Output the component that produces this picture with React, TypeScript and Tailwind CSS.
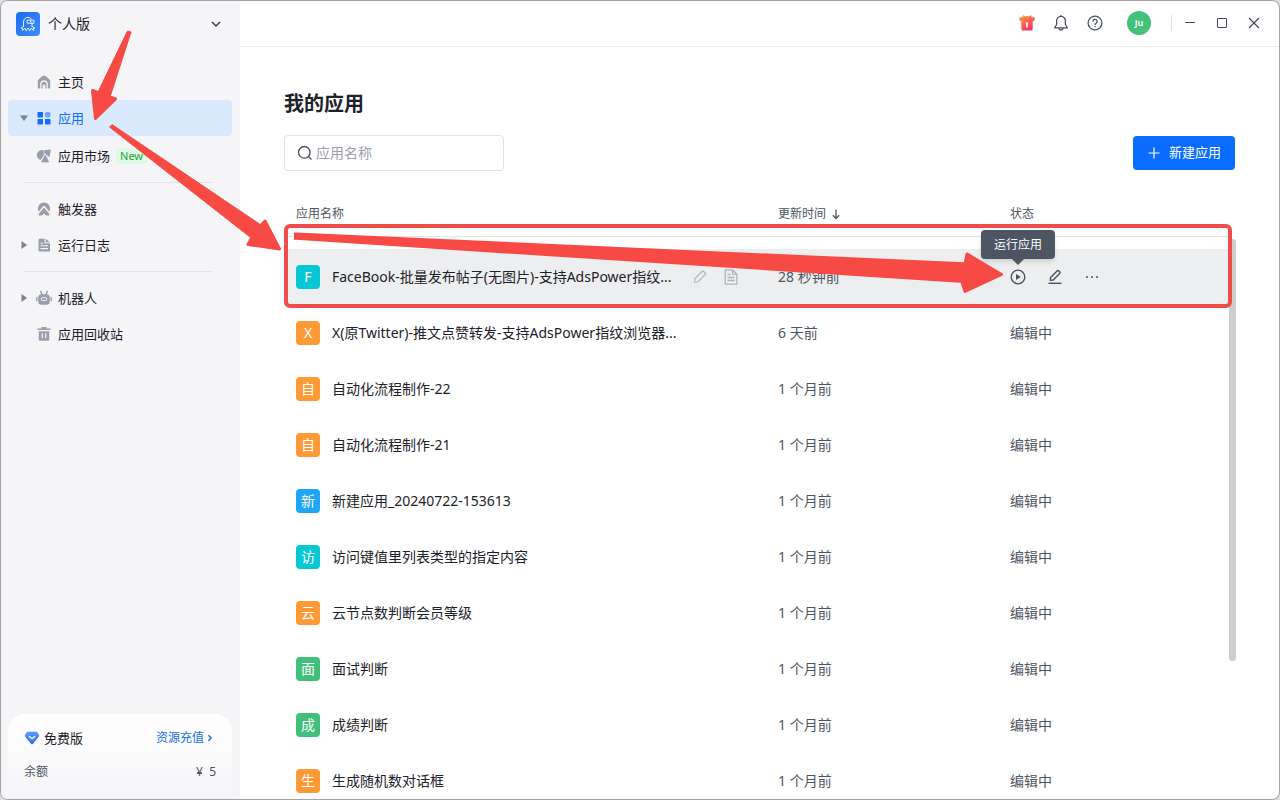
import { ReactNode } from "react";

interface NavItemProps {
    label: string;
    icon: ReactNode;
    arrow?: "right" | "down";
    active?: boolean;
    badge?: string;
}

interface AppRowProps {
    letter: string;
    color: string;
    name: string;
    updated: string;
    hovered?: boolean;
}

const apps: AppRowProps[] = [
    {
        letter: "F",
        color: "bg-[#06c8d4]",
        name: "FaceBook-批量发布帖子(无图片)-支持AdsPower指纹...",
        updated: "28 秒钟前",
        hovered: true,
    },
    {
        letter: "X",
        color: "bg-[#fe9a35]",
        name: "X(原Twitter)-推文点赞转发-支持AdsPower指纹浏览器...",
        updated: "6 天前",
    },
    { letter: "自", color: "bg-[#fe9a35]", name: "自动化流程制作-22", updated: "1 个月前" },
    { letter: "自", color: "bg-[#fe9a35]", name: "自动化流程制作-21", updated: "1 个月前" },
    { letter: "新", color: "bg-[#1ea6f7]", name: "新建应用_20240722-153613", updated: "1 个月前" },
    { letter: "访", color: "bg-[#06c8d4]", name: "访问键值里列表类型的指定内容", updated: "1 个月前" },
    { letter: "云", color: "bg-[#fe9a35]", name: "云节点数判断会员等级", updated: "1 个月前" },
    { letter: "面", color: "bg-[#41c07b]", name: "面试判断", updated: "1 个月前" },
    { letter: "成", color: "bg-[#41c07b]", name: "成绩判断", updated: "1 个月前" },
    { letter: "生", color: "bg-[#fe9a35]", name: "生成随机数对话框", updated: "1 个月前" },
];

const LogoIcon = () => (
    <svg viewBox="0 0 24 24" className="size-6">
        <defs>
            <linearGradient id="logo" x1="0" y1="0" x2="1" y2="1">
                <stop offset="0" stopColor="#1b6cf0" />
                <stop offset="1" stopColor="#3d8dff" />
            </linearGradient>
        </defs>
        <rect width="24" height="24" rx="4" fill="url(#logo)" />
        <g fill="none" stroke="#e4efff" strokeWidth="1" strokeLinejoin="round" strokeLinecap="round">
            <path d="M7.500 14.500V9.800A4.500 4.500 0 0 1 15.500 7" />
            <path d="M11.500 8.200h6.500v3h-6.500zM14.800 8.200v3M16 11.200v3.300" />
            <path d="M7.500 14.500 5 16l1.800.5-.3 2 2.500-2.300 1.200 2.600 1.800-2.800 1.800 2.800 1.200-2.600 2.500 2.300-.3-2L19 16l-3-1.500" />
        </g>
    </svg>
);

const HomeIcon = () => (
    <svg viewBox="0 0 16 16" className="size-4">
        <path
            fill="#9a9ea8"
            fillRule="evenodd"
            d="M8 1.500c.5 0 1 .2 1.400.500l3.200 2.400c1 .8 1.600 1.900 1.600 3.100v6c0 .6-.4 1-1 1h-1.400V10a3.800 3.800 0 0 0-7.600 0v4.500H2.800c-.6 0-1-.4-1-1v-6c0-1.200.6-2.300 1.600-3.100L6.600 2c.4-.3.9-.5 1.400-.5Z"
        />
        <path fill="#9a9ea8" d="M5.500 14.500V10.200a2.500 2.500 0 0 1 5 0v4.300H9.300v-3.800H6.700v3.800z" />
    </svg>
);

const AppsIcon = () => (
    <svg viewBox="0 0 16 16" className="size-4">
        <g fill="#0f6dff">
            <rect x="1.500" y="2" width="5.500" height="5.500" rx="0.800" />
            <rect x="1.500" y="9" width="5.500" height="5.500" rx="0.800" />
            <rect x="9" y="9" width="5.500" height="5.500" rx="0.800" />
        </g>
        <circle cx="11.700" cy="4.700" r="2.900" fill="#6fa5ff" />
    </svg>
);

const MarketIcon = () => (
    <svg viewBox="0 0 16 16" className="size-4">
        <g fill="#9a9ea8">
            <path d="M7.200 2.200A5 5 0 0 0 4.500 12L8 7z" />
            <path d="M7.800 2.300 14 1.600c.5 0 .8.300.7.800l-1 5.800c-.1.700-.8.900-1.200.4L7.800 4.600z" />
            <path
                d="M8.700 6.700c.3-.5.900-.5 1.200 0l3.300 6.800c.3.600 0 1.200-.7 1.200H5.800c-.6 0-1-.6-.7-1.200z"
                stroke="#f5f5f8"
                strokeWidth="0.600"
            />
        </g>
    </svg>
);

const TriggerIcon = () => (
    <svg viewBox="0 0 16 16" className="size-4">
        <path
            fill="#9a9ea8"
            d="M8 1.500a6 6 0 0 1 5.100 9.200l-1.300-1.900L9.100 5.600a1.400 1.400 0 0 0-2.200 0L4.200 8.800l-1.300 1.900A6 6 0 0 1 8 1.500Z"
        />
        <path
            fill="#9a9ea8"
            d="M7.300 7.300c.4-.5 1-.5 1.400 0l4.600 5.800c.5.600.1 1.400-.6 1.400H10L8 12.500l-2 2H3.300c-.7 0-1.100-.8-.6-1.400z"
        />
    </svg>
);

const LogIcon = () => (
    <svg viewBox="0 0 16 16" className="size-4">
        <path
            fill="#9a9ea8"
            d="M3.500 1.800h5v4.400h5.500v7.300c0 .6-.4 1-1 1H3.500c-.6 0-1-.4-1-1V2.800c0-.6.4-1 1-1Z"
        />
        <path fill="#9a9ea8" d="M9.700 1.800 14 5.200H9.700z" />
        <path stroke="#f5f5f8" strokeWidth="1.100" d="M4.500 6.200H7M4.500 8.800h7.500M4.500 11.600h7.500" />
    </svg>
);

const RobotIcon = () => (
    <svg viewBox="0 0 16 16" className="size-4">
        <g stroke="#9a9ea8" strokeWidth="1.400" strokeLinecap="round">
            <path d="m4.800 1.500 1.200 3M11.200 1.500l-1.200 3M.8 7.500v3M15.200 7.500v3" />
        </g>
        <rect x="2.300" y="4.200" width="11.400" height="10.600" rx="3" fill="#9a9ea8" />
        <rect x="5.200" y="7.600" width="5.600" height="3" rx="1.500" fill="none" stroke="#f5f5f8" />
    </svg>
);

const TrashIcon = () => (
    <svg viewBox="0 0 16 16" className="size-4">
        <path fill="#9a9ea8" d="M5.500 1h5v1.500h4V4h-13V2.500h4z" />
        <path fill="#9a9ea8" d="M2.800 5.200h10.400v8.300c0 .8-.5 1.300-1.300 1.300H4.100c-.8 0-1.300-.5-1.300-1.300z" />
        <path stroke="#f5f5f8" strokeWidth="1.200" d="M6.300 7.300v5M9.700 7.300v5" />
    </svg>
);

const GiftIcon = () => (
    <svg viewBox="0 0 16 16" className="size-4">
        <defs>
            <linearGradient id="gift" x1="0" y1="0" x2="0.600" y2="1">
                <stop offset="0" stopColor="#ffa63c" />
                <stop offset="0.500" stopColor="#fd6a4c" />
                <stop offset="1" stopColor="#fb2f68" />
            </linearGradient>
        </defs>
        <path
            fill="url(#gift)"
            d="M4 0 6.300 1.400 8 .8l1.700.600L12 0l.6 2.200h2.300c.6 0 .9.300.9.900l-.3 2.300c-.1.500-.4.700-.9.700h-.8l-.2 8c-.1 1-.6 1.500-1.600 1.500H4c-1 0-1.500-.5-1.600-1.500l-.2-8h-.8c-.5 0-.8-.2-.9-.7L.2 3.100c0-.6.3-.9.9-.9h2.300z"
        />
        <path stroke="#fff" strokeWidth="1.600" d="M8 7.200v5.400" />
    </svg>
);

const BellIcon = () => (
    <svg viewBox="0 0 16 16" className="size-4" fill="none" stroke="#4a505c" strokeWidth="1.300">
        <path
            strokeLinejoin="round"
            d="M8 1.400c-2.700 0-4.400 2-4.400 4.600v3.500L1.700 12.800h12.600l-1.900-3.300V6c0-2.600-1.700-4.600-4.400-4.600ZM8 0v1.400"
        />
        <path d="M5.800 13c.2 1.300 1 2 2.200 2s2-.7 2.200-2" />
    </svg>
);

const HelpIcon = () => (
    <svg viewBox="0 0 16 16" className="size-4" fill="none" stroke="#4a505c" strokeWidth="1.300">
        <circle cx="8" cy="8" r="6.900" />
        <path d="M5.900 6.500a2.100 2.100 0 1 1 3.200 1.700c-.7.500-1.100.8-1.100 1.700M8 10.900v1.300" />
    </svg>
);

const PlayIcon = () => (
    <svg viewBox="0 0 16 16" className="size-4">
        <circle cx="8" cy="8" r="6.800" fill="none" stroke="#4a505c" strokeWidth="1.300" />
        <path fill="#4a505c" d="M6 5v6l4.800-3z" />
    </svg>
);

const EditIcon = () => (
    <svg
        viewBox="0 0 16 16"
        className="size-4"
        fill="none"
        stroke="#4a505c"
        strokeWidth="1.400"
        strokeLinejoin="round"
    >
        <path d="m3.300 11.300.3-2.900 6.700-6.700a.9.900 0 0 1 1.200 0l1.400 1.400a.9.900 0 0 1 0 1.200L6.200 11z" />
        <path d="M1.500 14.300h13" />
    </svg>
);

const PencilIcon = () => (
    <svg
        viewBox="0 0 16 16"
        className="size-4"
        fill="none"
        stroke="#b5b8be"
        strokeWidth="1.300"
        strokeLinejoin="round"
    >
        <path d="m2.500 13.200.4-3.500 7.200-7.200a1.100 1.100 0 0 1 1.600 0l1.500 1.500a1.100 1.100 0 0 1 0 1.600L6 12.800z" />
    </svg>
);

const DocIcon = () => (
    <svg
        viewBox="0 0 16 16"
        className="size-4"
        fill="none"
        stroke="#b0b4bb"
        strokeWidth="1.300"
        strokeLinejoin="round"
    >
        <path d="M2.200.8h7.300l4.300 4.300v10.100H2.200zM9.500.8v4.300h4.300" />
        <path d="M4.500 5.500h3M4.500 8.500h7M4.500 11.500h7" />
    </svg>
);

const DiamondIcon = () => (
    <svg viewBox="0 0 16 16" className="size-4">
        <defs>
            <linearGradient id="diamond" x1="0" y1="0" x2="0" y2="1">
                <stop offset="0" stopColor="#5b9cff" />
                <stop offset="1" stopColor="#2f6cf0" />
            </linearGradient>
        </defs>
        <path
            fill="url(#diamond)"
            d="M3.700 1.800h8.600c.4 0 .8.200 1 .5l1.700 2.600c.3.500.3 1 0 1.500l-6.100 7.500c-.5.600-1.300.6-1.800 0L1 6.400c-.3-.5-.3-1 0-1.500l1.700-2.600c.2-.3.600-.5 1-.5Z"
        />
        <path d="m5.400 6.500 2.600 2.200 2.600-2.200" fill="none" stroke="#fff" strokeWidth="1.300" strokeLinecap="round" />
    </svg>
);

const NavItem = ({ label, icon, arrow, active, badge }: NavItemProps) => {
    return (
        <a
            href="#"
            className={`flex h-9 items-center rounded px-3 text-[13px] leading-5 ${
                active ? "mb-0.5 bg-[#dbe9fe] text-[#0f6dff]" : "text-[#1d2129]"
            }`}
        >
            <span className="flex w-4 shrink-0">
                {arrow && (
                    <svg viewBox="0 0 8 8" className="size-2">
                        <path
                            fill="#7d828d"
                            d={arrow === "down" ? "M0 1.500h8L4 7z" : "M1.500 0v8L7 4z"}
                        />
                    </svg>
                )}
            </span>
            {icon}
            <span className="ml-1.5">{label}</span>
            {badge && (
                <span className="ml-1.5 rounded bg-[#dcfae4] px-1 text-[11px] leading-4 text-[#1fa63c]">
                    {badge}
                </span>
            )}
        </a>
    );
};

const Sidebar = () => {
    return (
        <aside className="flex w-[239px] shrink-0 flex-col bg-[#f5f5f8]">
            <button
                type="button"
                className="flex h-[46px] items-center pr-[19px] pl-[15px] text-sm text-[#1d2129]"
            >
                <LogoIcon />
                <span className="ml-2">个人版</span>
                <svg
                    viewBox="0 0 10 10"
                    className="ml-auto size-2.5"
                    fill="none"
                    stroke="#3c414b"
                    strokeWidth="1.500"
                >
                    <path d="m1 3 4 4 4-4" />
                </svg>
            </button>
            <nav className="mt-[17px] pr-2 pl-[7px]">
                <NavItem label="主页" icon={<HomeIcon />} />
                <NavItem label="应用" icon={<AppsIcon />} arrow="down" active />
                <NavItem label="应用市场" icon={<MarketIcon />} badge="New" />
                <hr className="my-2 mr-5 ml-[15px] border-[#e2e3e6]" />
                <NavItem label="触发器" icon={<TriggerIcon />} />
                <NavItem label="运行日志" icon={<LogIcon />} arrow="right" />
                <hr className="my-2 mr-5 ml-[15px] border-[#e2e3e6]" />
                <NavItem label="机器人" icon={<RobotIcon />} arrow="right" />
                <NavItem label="应用回收站" icon={<TrashIcon />} />
            </nav>
            <div className="mt-auto mr-2 ml-[7px] rounded-t-2xl bg-gradient-to-b from-white to-[#f5f5f8] px-4 pt-3.5 pb-[17px]">
                <div className="flex items-center leading-5">
                    <DiamondIcon />
                    <span className="ml-1 text-[13px] text-[#1d2129]">免费版</span>
                    <a href="#" className="mr-0.5 ml-auto flex items-center text-xs leading-5 text-[#1a6fe8]">
                        资源充值
                        <svg
                            viewBox="0 0 8 8"
                            className="ml-0.5 size-2"
                            fill="none"
                            stroke="currentColor"
                            strokeWidth="1.500"
                        >
                            <path d="m2.500 1.200 2.600 2.800-2.600 2.800" />
                        </svg>
                    </a>
                </div>
                <div className="mt-3.5 flex justify-between text-xs leading-5 text-[#4e5562]">
                    <span>余额</span>
                    <span>¥&nbsp; 5</span>
                </div>
            </div>
        </aside>
    );
};

const TopBar = () => {
    return (
        <header className="flex h-[46px] shrink-0 items-center justify-end border-b border-[#ececee] pr-[19px] pb-0.5">
            <button type="button" aria-label="礼物" className="mr-[18px]">
                <GiftIcon />
            </button>
            <button type="button" aria-label="通知" className="mr-[18px]">
                <BellIcon />
            </button>
            <button type="button" aria-label="帮助" className="mr-6">
                <HelpIcon />
            </button>
            <button
                type="button"
                className="flex size-6 items-center justify-center rounded-full bg-[#43c07a] text-[9px] font-semibold text-white"
            >
                Ju
            </button>
            <span className="mr-3 ml-5 h-4 w-px bg-[#dfe0e3]" />
            <div className="flex gap-5 text-[#3f4550]">
                <button type="button" aria-label="最小化">
                    <svg viewBox="0 0 12 12" className="size-3" stroke="currentColor">
                        <path d="M1 5.500h10" />
                    </svg>
                </button>
                <button type="button" aria-label="最大化">
                    <svg viewBox="0 0 12 12" className="size-3" fill="none" stroke="currentColor">
                        <rect x="1.500" y="1.500" width="9" height="9" rx="0.500" />
                    </svg>
                </button>
                <button type="button" aria-label="关闭">
                    <svg viewBox="0 0 12 12" className="size-3" stroke="currentColor" strokeWidth="1.100">
                        <path d="m1 1 10 10M11 1 1 11" />
                    </svg>
                </button>
            </div>
        </header>
    );
};

const RowActions = () => {
    return (
        <div className="flex items-center gap-[21px]">
            <button type="button" aria-label="运行应用" className="relative">
                <PlayIcon />
                <span
                    role="tooltip"
                    className="absolute bottom-[26px] left-1/2 -translate-x-1/2 rounded bg-[#4e5562] px-[13px] text-xs leading-[29px] whitespace-nowrap text-white shadow-md after:absolute after:top-full after:left-1/2 after:-translate-x-1/2 after:border-x-6 after:border-t-6 after:border-x-transparent after:border-t-[#4e5562] after:content-['']"
                >
                    运行应用
                </span>
            </button>
            <button type="button" aria-label="编辑">
                <EditIcon />
            </button>
            <button type="button" aria-label="更多">
                <svg viewBox="0 0 16 16" className="size-4" fill="#4a505c">
                    <circle cx="3" cy="8" r="1" />
                    <circle cx="8" cy="8" r="1" />
                    <circle cx="13" cy="8" r="1" />
                </svg>
            </button>
        </div>
    );
};

const AppRow = ({ letter, color, name, updated, hovered }: AppRowProps) => {
    return (
        <tr className={hovered ? "bg-[#edeef0]" : ""}>
            <td className="h-14 px-3">
                <div className="flex items-center">
                    <span
                        className={`flex size-6 shrink-0 items-center justify-center rounded-sm text-sm text-white ${color}`}
                    >
                        {letter}
                    </span>
                    <span className="ml-3 text-sm whitespace-nowrap text-[#1d2129]">{name}</span>
                    {hovered && (
                        <span className="ml-5 flex gap-[15px]">
                            <button type="button" aria-label="重命名">
                                <PencilIcon />
                            </button>
                            <button type="button" aria-label="详情">
                                <DocIcon />
                            </button>
                        </span>
                    )}
                </div>
            </td>
            <td className="px-3 text-sm">{updated}</td>
            <td className="px-3 text-sm">{hovered ? <RowActions /> : "编辑中"}</td>
        </tr>
    );
};

const AppTable = () => {
    return (
        <div className="relative mt-[19px] pr-1.5">
            <table className="w-full table-fixed text-left text-[#4e5562]">
                <thead className="text-xs">
                    <tr className="h-[46px] border-b border-[#e4e5e8]">
                        <th className="w-[482px] px-3 pt-0.5 font-normal">应用名称</th>
                        <th className="w-[232px] px-3 pt-0.5 font-normal">
                            <span className="flex items-center gap-1">
                                更新时间
                                <svg
                                    viewBox="0 0 12 12"
                                    className="size-3"
                                    fill="none"
                                    stroke="currentColor"
                                    strokeWidth="1.300"
                                >
                                    <path d="M6 1.500v9M2.800 7.300 6 10.500l3.200-3.200" />
                                </svg>
                            </span>
                        </th>
                        <th className="px-3 pt-0.5 font-normal">状态</th>
                    </tr>
                </thead>
                <tbody className="before:block before:h-3 before:content-['']">
                    {apps.map((app) => (
                        <AppRow key={app.name} {...app} />
                    ))}
                </tbody>
            </table>
            {/* scrollbar thumb */}
            <div className="absolute top-[49px] -right-px h-[422px] w-[7px] rounded-full bg-[#1d2129]/22" />
        </div>
    );
};

const Annotations = () => {
    return (
        <svg
            aria-hidden="true"
            className="pointer-events-none absolute -top-px -left-px size-full"
            fill="#f84a45"
            stroke="#f84a45"
            strokeLinejoin="round"
        >
            <rect x="286" y="226" width="944" height="80" rx="4" fill="none" stroke="#f04c4a" strokeWidth="4" />
            <path strokeWidth="1" d="M127.500 31 131 32 110 97 98 92z" />
            <path strokeWidth="3" d="M92.500 90.500 115.500 99 95.500 118.500z" />
            <path strokeWidth="1" d="M109.500 127 112 124.500 261 225 250 237z" />
            <path strokeWidth="3" d="M265 221 279.500 249 248 244.500 255 232z" />
            <path stroke="none" d="M294 232.500 964 262.300V283L294 239.700z" />
            <path strokeWidth="3" d="M967 254 1001.500 274.500 965 291.500 962 282 965 264z" />
        </svg>
    );
};

const App = () => {
    return (
        <div className="h-screen bg-[#dcdcdc] font-['Noto_Sans','Noto_Sans_CJK_SC',sans-serif]">
            <div className="relative flex h-full overflow-hidden rounded-lg border border-[#a3a3a5] bg-white">
                <Sidebar />
                <div className="flex min-w-0 flex-1 flex-col">
                    <TopBar />
                    <main className="min-h-0 flex-1 overflow-hidden px-11 pt-[43px]">
                        <h1 className="text-xl leading-7 font-bold text-[#1d2129]">我的应用</h1>
                        <div className="mt-[17px] flex items-center justify-between">
                            <label className="flex h-9 w-[220px] items-center rounded border border-[#e1e2e5] px-3">
                                <svg
                                    viewBox="0 0 16 16"
                                    className="size-4 shrink-0"
                                    fill="none"
                                    stroke="#4a505c"
                                    strokeWidth="1.300"
                                >
                                    <circle cx="7.300" cy="7.300" r="5.800" />
                                    <path d="m11.500 11.500 3 3" />
                                </svg>
                                <input
                                    type="text"
                                    aria-label="应用名称"
                                    placeholder="应用名称"
                                    className="ml-[3px] w-full min-w-0 text-sm outline-none placeholder:text-[#9ca0a8]"
                                />
                            </label>
                            <button
                                type="button"
                                className="flex h-[34px] items-center rounded-sm bg-[#0a6dff] px-3.5 text-[13px] text-white"
                            >
                                <svg
                                    viewBox="0 0 14 14"
                                    className="mr-2 size-3.5"
                                    stroke="currentColor"
                                    strokeWidth="1.200"
                                >
                                    <path d="M7 1.500v11M1.500 7h11" />
                                </svg>
                                新建应用
                            </button>
                        </div>
                        <AppTable />
                    </main>
                </div>
                <Annotations />
            </div>
        </div>
    );
};

export default App;
